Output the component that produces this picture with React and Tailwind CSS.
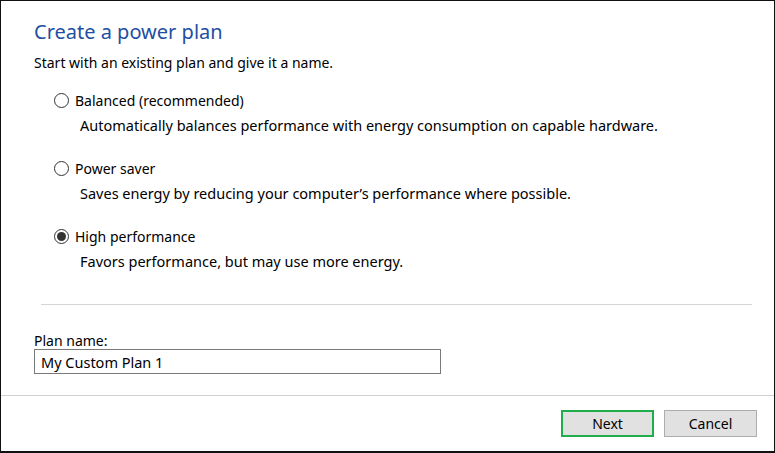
import React, { useState } from "react";

const plans = [
    { id: "balanced", label: "Balanced (recommended)", desc: "Automatically balances performance with energy consumption on capable hardware." },
    { id: "saver", label: "Power saver", desc: "Saves energy by reducing your computer\u2019s performance where possible." },
    { id: "high", label: "High performance", desc: "Favors performance, but may use more energy." },
];

function Radio({ checked }) {
    return (
        <span className="w-[15px] h-[15px] rounded-full border border-[#333] bg-white flex items-center justify-center shrink-0">
            {checked && <span className="w-[9px] h-[9px] rounded-full bg-[#333]"></span>}
        </span>
    );
}

export default function App() {
    const [plan, setPlan] = useState("high");
    const [name, setName] = useState("My Custom Plan 1");

    return (
        <div
            className="w-[775px] h-[453px] bg-white border border-b-2 border-[#111] flex flex-col text-black"
            style={{ fontFamily: '"Segoe UI", "Noto Sans", sans-serif' }}
        >
            <div className="flex-1 flex flex-col pl-[33px] pr-[22px] pt-[17px]">
                <h1 className="text-[20px] leading-[28px] text-[#1e4fa3]">Create a power plan</h1>
                <p className="text-[14px] leading-[20px] mt-[7px]">Start with an existing plan and give it a name.</p>

                {/* Plan choices */}
                <div className="flex flex-col gap-[23px] mt-[17px] pl-[20px]">
                    {plans.map((p) => (
                        <div key={p.id} className="flex flex-col cursor-default" onClick={() => setPlan(p.id)}>
                            <div className="flex items-center gap-[6px] h-[20px]">
                                <Radio checked={plan === p.id} />
                                <span className="text-[14px]">{p.label}</span>
                            </div>
                            <div className="text-[14.5px] leading-[20px] pl-[26px] mt-[5px]">{p.desc}</div>
                        </div>
                    ))}
                </div>

                <div className="h-px bg-[#d4d4d4] mt-[33px] ml-[7px]"></div>

                <label className="text-[14px] leading-[17px] mt-[27px]">Plan name:</label>
                <input
                    value={name}
                    onChange={(e) => setName(e.target.value)}
                    className="w-[407px] h-[25px] border border-[#7a7a7a] px-[6px] text-[14.5px] outline-none"
                />
            </div>

            {/* Footer */}
            <div className="h-[56px] border-t border-[#d0d0d0] flex justify-end items-start gap-[10px] pt-[14px] pr-[17px]">
                <button className="w-[93px] h-[27px] bg-[#e1e1e1] border-2 border-[#1fae4b] text-[14px]">Next</button>
                <button className="w-[93px] h-[27px] bg-[#e1e1e1] border border-[#adadad] text-[14px]">Cancel</button>
            </div>
        </div>
    );
}
